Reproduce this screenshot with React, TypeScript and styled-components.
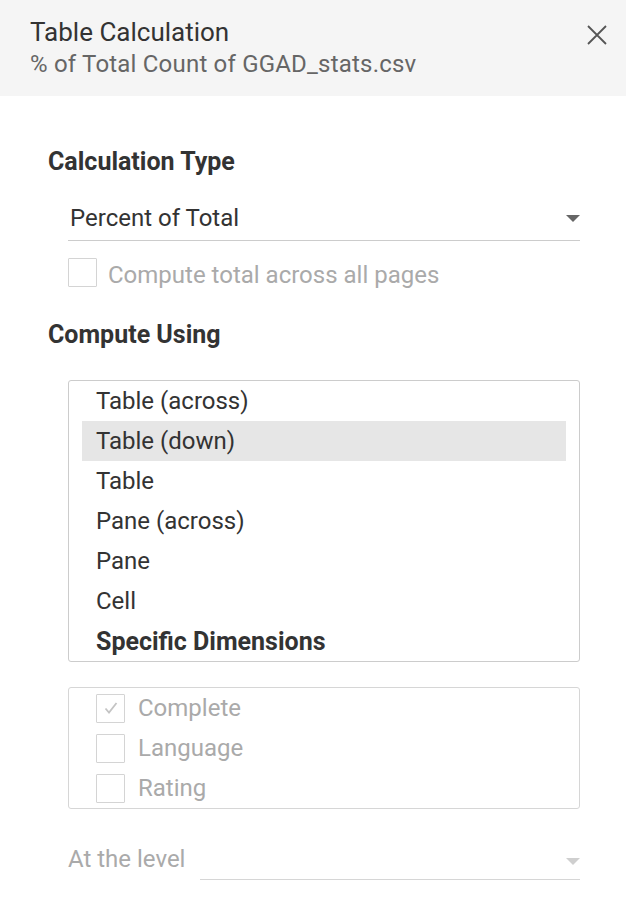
import React from "react";
import styled, { createGlobalStyle } from "styled-components";

const Global = createGlobalStyle`
  html, body { margin: 0; padding: 0; background: #ffffff; }
  body { font-family: Roboto, "Noto Sans", "Liberation Sans", sans-serif; color: #333; }
  * { box-sizing: border-box; }
`;

const Panel = styled.div`
  width: 626px;
  height: 904px;
  background: #fff;
  overflow: hidden;
`;

const Header = styled.header`
  height: 96px;
  background: #f5f5f5;
  display: flex;
  justify-content: space-between;
  align-items: flex-start;
  padding: 16px 19px 0 30px;
`;

const TitleBlock = styled.div`
  display: flex;
  flex-direction: column;
`;

const Title = styled.div`
  font-size: 26px;
  line-height: 32px;
  color: #333;
`;

const Subtitle = styled.div`
  font-size: 24px;
  line-height: 32px;
  letter-spacing: 0.2px;
  color: #666;
`;

const CloseButton = styled.button`
  border: 0;
  background: transparent;
  padding: 0;
  margin-top: 9px;
  width: 20px;
  height: 20px;
  display: flex;
  cursor: pointer;
`;

const Body = styled.div`
  padding: 51px 46px 0 48px;
  display: flex;
  flex-direction: column;
`;

const Heading = styled.div<{ $top?: number }>`
  font-size: 25px;
  line-height: 30px;
  font-weight: 700;
  color: #333;
  margin-top: ${(p) => p.$top ?? 0}px;
`;

const Select = styled.div<{ $disabled?: boolean }>`
  display: flex;
  align-items: center;
  justify-content: space-between;
  border-bottom: 1px solid ${(p) => (p.$disabled ? "#d6d6d6" : "#cccccc")};
  color: ${(p) => (p.$disabled ? "#aaa" : "#333")};
  font-size: 24px;
  line-height: 30px;
`;

const TypeSelect = styled(Select)`
  margin: 26px 0 0 20px;
  padding: 0 0 7px 2px;
`;

const Arrow = styled.span<{ $disabled?: boolean }>`
  width: 0;
  height: 0;
  border-left: 7px solid transparent;
  border-right: 7px solid transparent;
  border-top: 7px solid ${(p) => (p.$disabled ? "#cfcfcf" : "#666")};
`;

const CheckRow = styled.label<{ $disabled?: boolean }>`
  display: flex;
  align-items: center;
  gap: 11px;
  color: ${(p) => (p.$disabled ? "#aaa" : "#333")};
  font-size: 24px;
  line-height: 30px;
`;

const PagesRow = styled(CheckRow)`
  margin: 17px 0 0 20px;
  align-items: flex-start;
`;

const PagesText = styled.span`
  padding-top: 4px;
  line-height: 26px;
`;

const Box = styled.span`
  width: 29px;
  height: 29px;
  border: 1px solid #d4d4d4;
  border-radius: 1px;
  display: flex;
  align-items: center;
  justify-content: center;
  flex-shrink: 0;
`;

const ListBox = styled.div`
  margin: 30px 0 0 20px;
  border: 1px solid #cccccc;
  border-radius: 3px;
  padding: 0 13px;
  display: flex;
  flex-direction: column;
`;

const ListItem = styled.div<{ $selected?: boolean; $bold?: boolean }>`
  height: 40px;
  display: flex;
  align-items: center;
  padding-left: 14px;
  font-size: ${(p) => (p.$bold ? 25 : 24)}px;
  color: #333;
  font-weight: ${(p) => (p.$bold ? 700 : 400)};
  background: ${(p) => (p.$selected ? "#e6e6e6" : "transparent")};
`;

const DimBox = styled.div`
  margin: 25px 0 0 20px;
  border: 1px solid #d6d6d6;
  border-radius: 3px;
  padding: 0 27px;
  display: flex;
  flex-direction: column;
`;

const DimRow = styled(CheckRow)`
  height: 40px;
  gap: 13px;
`;

const LevelRow = styled.div`
  margin: 34px 0 0 20px;
  display: flex;
  align-items: flex-end;
`;

const LevelLabel = styled.div`
  width: 132px;
  font-size: 24px;
  line-height: 30px;
  color: #aaa;
  padding-bottom: 6px;
`;

const LevelSelect = styled(Select)`
  flex: 1;
  height: 37px;
  padding-bottom: 14px;
  align-items: flex-end;
`;

const CloseIcon = () => (
  <svg width="20" height="20" viewBox="0 0 20 20">
    <path d="M1 1 L19 19 M19 1 L1 19" stroke="#555" strokeWidth="1.8" fill="none" />
  </svg>
);

const Check = () => (
  <svg width="16" height="14" viewBox="0 0 16 14">
    <path d="M2.5 7.5 L6 11.5 L13.5 2" stroke="#c4c4c4" strokeWidth="1.8" fill="none" />
  </svg>
);

const items = ["Table (across)", "Table (down)", "Table", "Pane (across)", "Pane", "Cell"];
const dims = [
  { name: "Complete", checked: true },
  { name: "Language", checked: false },
  { name: "Rating", checked: false },
];

export default function App() {
  return (
    <Panel>
      <Global />
      <Header>
        <TitleBlock>
          <Title>Table Calculation</Title>
          <Subtitle>% of Total Count of GGAD_stats.csv</Subtitle>
        </TitleBlock>
        <CloseButton aria-label="Close">
          <CloseIcon />
        </CloseButton>
      </Header>
      <Body>
        <Heading>Calculation Type</Heading>
        <TypeSelect>
          <span>Percent of Total</span>
          <Arrow />
        </TypeSelect>
        <PagesRow $disabled>
          <Box />
          <PagesText>Compute total across all pages</PagesText>
        </PagesRow>
        <Heading $top={32}>Compute Using</Heading>
        <ListBox>
          {items.map((it, i) => (
            <ListItem key={it} $selected={i === 1}>
              {it}
            </ListItem>
          ))}
          <ListItem $bold>Specific Dimensions</ListItem>
        </ListBox>
        <DimBox>
          {dims.map((d) => (
            <DimRow key={d.name} $disabled>
              <Box>{d.checked && <Check />}</Box>
              <span>{d.name}</span>
            </DimRow>
          ))}
        </DimBox>
        <LevelRow>
          <LevelLabel>At the level</LevelLabel>
          <LevelSelect $disabled>
            <span />
            <Arrow $disabled />
          </LevelSelect>
        </LevelRow>
      </Body>
    </Panel>
  );
}
